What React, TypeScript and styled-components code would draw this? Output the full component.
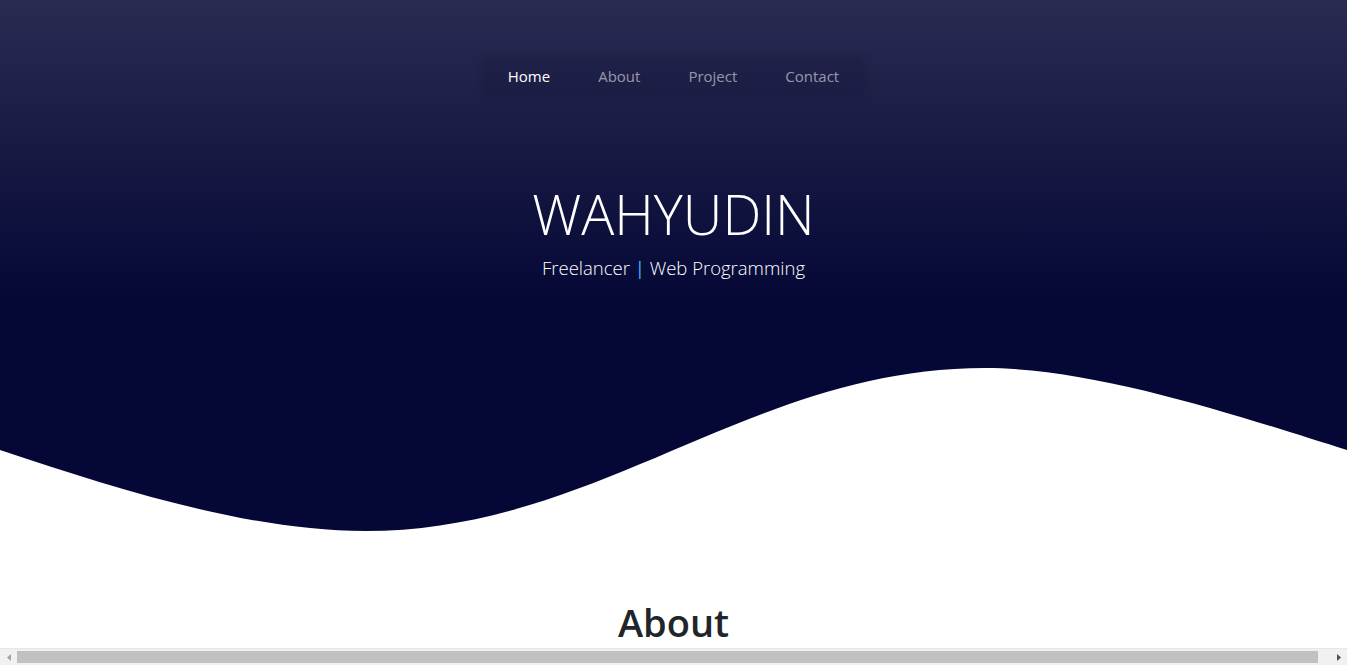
import React from "react";
import styled, { createGlobalStyle } from "styled-components";

const Global = createGlobalStyle`
  html, body { overflow: hidden; }
  body {
    margin: 0;
    font-family: "Open Sans", "Noto Sans", "Liberation Sans", sans-serif;
    background: #ffffff;
    color: #212529;
  }
  * { box-sizing: border-box; }
`;

const Page = styled.div`
  height: 100vh;
  overflow: hidden;
`;

const Hero = styled.header`
  display: flex;
  flex-direction: column;
  align-items: center;
  height: 531px;
  padding-top: 57px;
  background: linear-gradient(180deg, #2a2b51 0px, #1a1c45 130px, #050836 300px, #050836 100%);
`;

const Nav = styled.nav`
  display: flex;
  background: rgba(10, 12, 40, 0.12);
  box-shadow: 0 2px 10px rgba(0, 0, 0, 0.12);
  border-radius: 3px;
`;

const NavLink = styled.a<{ $active?: boolean }>`
  display: block;
  padding: 10px 24px;
  font-size: 15px;
  line-height: 19px;
  font-weight: ${(p) => (p.$active ? 500 : 400)};
  color: ${(p) => (p.$active ? "#ffffff" : "rgba(255,255,255,0.55)")};
  text-decoration: none;
  cursor: pointer;
`;

const Title = styled.h1`
  margin: 85px 0 0;
  font-size: 55px;
  line-height: 66px;
  font-weight: 300;
  color: #ffffff;
`;

const Subtitle = styled.p`
  margin: 8px 0 0;
  font-size: 18.5px;
  line-height: 26px;
  font-weight: 300;
  color: #ffffff;
`;

const Pipe = styled.span`
  color: #35b8ff;
  font-weight: 400;
`;

const Wave = styled.svg`
  display: block;
  width: 100%;
  height: 163px;
  margin-top: auto;
`;

const Section = styled.section`
  padding-top: 68px;
`;

const Row = styled.div`
  display: flex;
  flex-wrap: wrap;
  margin: 0 -12px;
`;

const Col = styled.div`
  flex: 0 0 100%;
  padding: 0 12px;
  text-align: center;
`;

const Heading = styled.h2`
  margin: 0;
  font-size: 38px;
  line-height: 46px;
  font-weight: 600;
  color: #212529;
`;

/* horizontal scrollbar drawn over the bottom of the page */
const ScrollBar = styled.div`
  position: fixed;
  left: 0;
  right: 0;
  bottom: 0;
  height: 17px;
  display: flex;
  align-items: stretch;
  background: #f1f1f1;
  border-top: 1px solid #e6e6e6;
`;

const ArrowButton = styled.div`
  flex: 0 0 17px;
  display: flex;
  align-items: center;
  justify-content: center;
`;

const Track = styled.div`
  flex: 1;
  display: flex;
  align-items: center;
  padding-right: 12px;
`;

const Thumb = styled.div`
  flex: 1;
  height: 12px;
  background: #c1c1c1;
`;

export default function App() {
  return (
    <>
      <Global />
      <Page>
        <Hero>
          <Nav>
            <NavLink $active>Home</NavLink>
            <NavLink>About</NavLink>
            <NavLink>Project</NavLink>
            <NavLink>Contact</NavLink>
          </Nav>
          <Title>WAHYUDIN</Title>
          <Subtitle>
            Freelancer <Pipe>|</Pipe> Web Programming
          </Subtitle>
          <Wave viewBox="0 0 1347 163" preserveAspectRatio="none">
            <path
              d="M0,82 C120,122 250,163 365,163 C600,163 750,0 985,0 C1100,0 1250,52 1347,82 L1347,163 L0,163 Z"
              fill="#ffffff"
            />
          </Wave>
        </Hero>
        <Section>
          <Row>
            <Col>
              <Heading>About</Heading>
            </Col>
          </Row>
        </Section>
      </Page>
      <ScrollBar>
        <ArrowButton>
          <svg width="4" height="7" viewBox="0 0 4 7">
            <path d="M4,0 L0,3.5 L4,7 Z" fill="#a3a3a3" />
          </svg>
        </ArrowButton>
        <Track>
          <Thumb />
        </Track>
        <ArrowButton>
          <svg width="4" height="7" viewBox="0 0 4 7">
            <path d="M0,0 L4,3.5 L0,7 Z" fill="#505050" />
          </svg>
        </ArrowButton>
      </ScrollBar>
    </>
  );
}
